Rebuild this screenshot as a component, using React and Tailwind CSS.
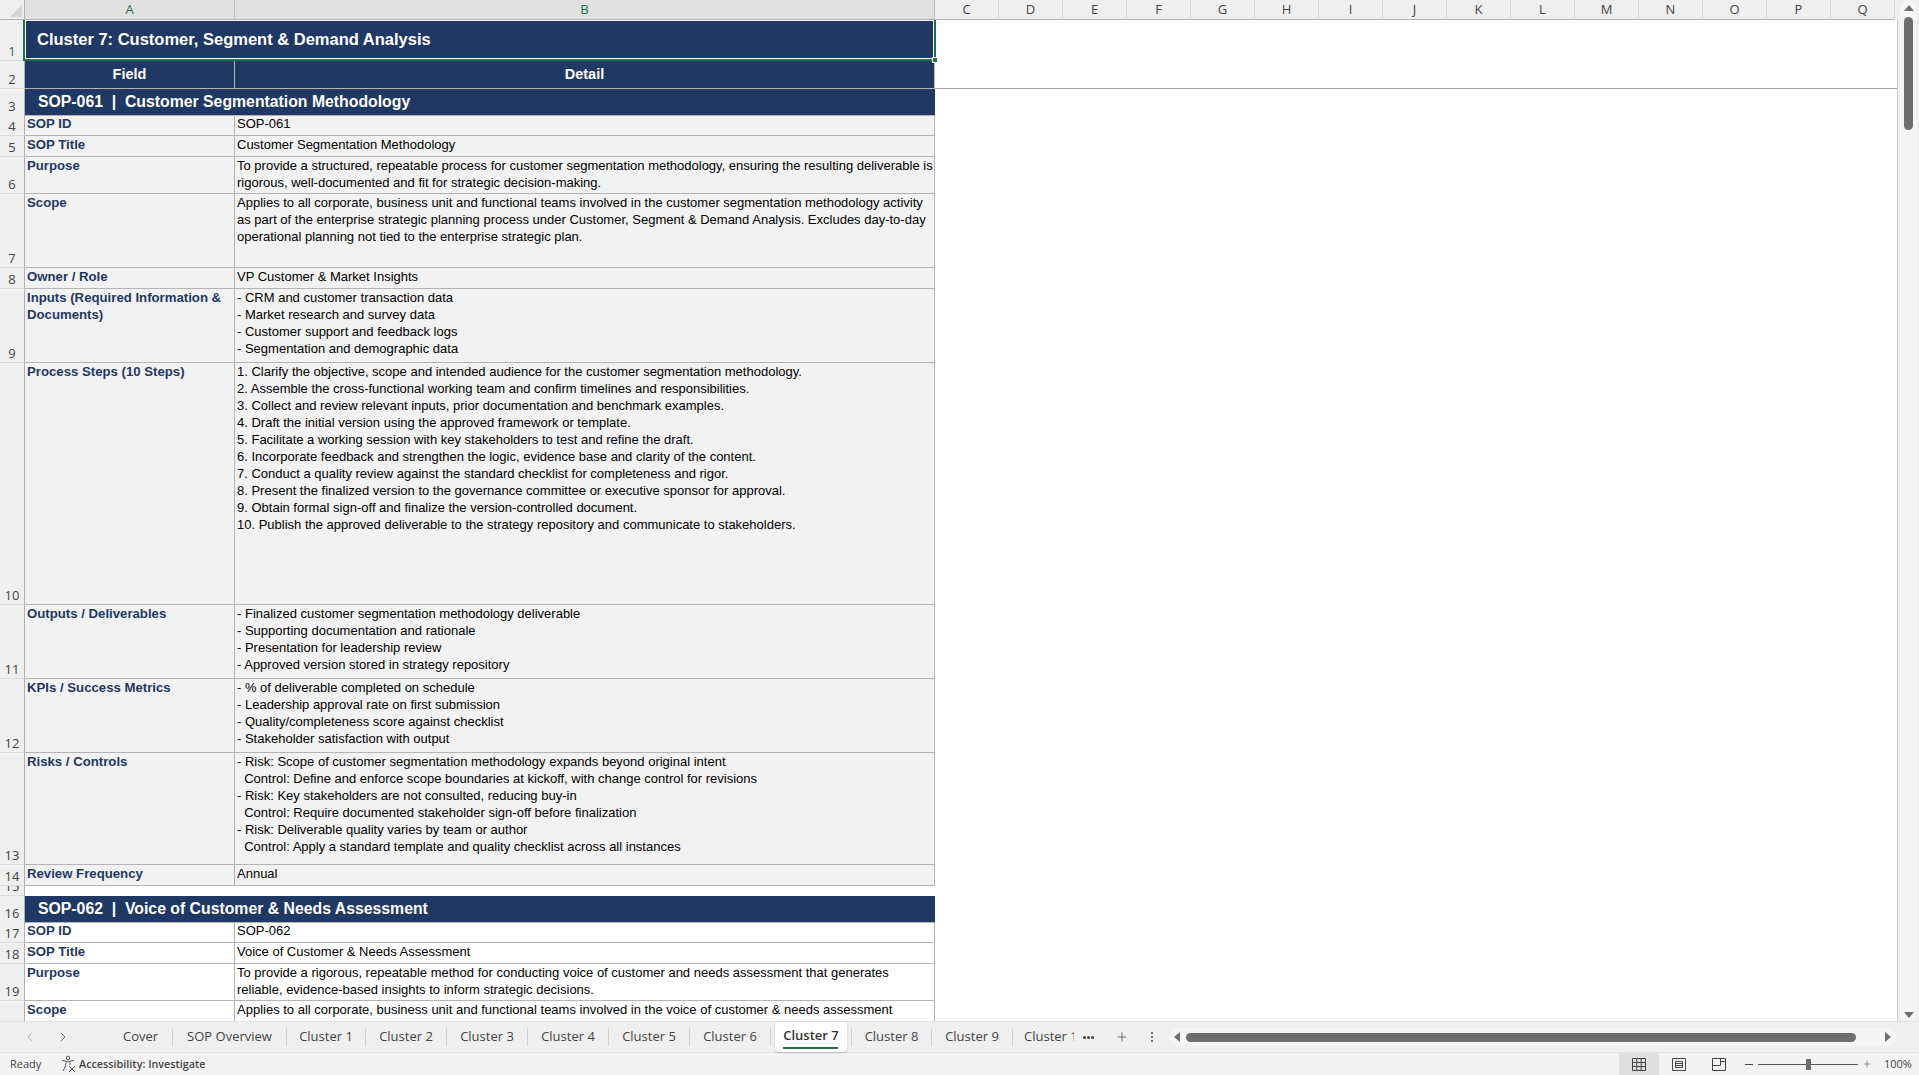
import { ChevronLeft, ChevronRight, Plus } from 'lucide-react'

const columns = ['C', 'D', 'E', 'F', 'G', 'H', 'I', 'J', 'K', 'L', 'M', 'N', 'O', 'P', 'Q']

const rows = [
    { n: 4, h: 'h-[21px]', a: 'SOP ID', b: 'SOP-061' },
    { n: 5, h: 'h-[21px]', a: 'SOP Title', b: 'Customer Segmentation Methodology' },
    { n: 6, h: 'h-[37px]', a: 'Purpose', b: 'To provide a structured, repeatable process for customer segmentation methodology, ensuring the resulting deliverable is\nrigorous, well-documented and fit for strategic decision-making.' },
    { n: 7, h: 'h-[74px]', a: 'Scope', b: 'Applies to all corporate, business unit and functional teams involved in the customer segmentation methodology activity\nas part of the enterprise strategic planning process under Customer, Segment & Demand Analysis. Excludes day-to-day\noperational planning not tied to the enterprise strategic plan.' },
    { n: 8, h: 'h-[21px]', a: 'Owner / Role', b: 'VP Customer & Market Insights' },
    { n: 9, h: 'h-[74px]', a: 'Inputs (Required Information &\nDocuments)', b: '- CRM and customer transaction data\n- Market research and survey data\n- Customer support and feedback logs\n- Segmentation and demographic data' },
    { n: 10, h: 'h-[242px]', a: 'Process Steps (10 Steps)', b: '1. Clarify the objective, scope and intended audience for the customer segmentation methodology.\n2. Assemble the cross-functional working team and confirm timelines and responsibilities.\n3. Collect and review relevant inputs, prior documentation and benchmark examples.\n4. Draft the initial version using the approved framework or template.\n5. Facilitate a working session with key stakeholders to test and refine the draft.\n6. Incorporate feedback and strengthen the logic, evidence base and clarity of the content.\n7. Conduct a quality review against the standard checklist for completeness and rigor.\n8. Present the finalized version to the governance committee or executive sponsor for approval.\n9. Obtain formal sign-off and finalize the version-controlled document.\n10. Publish the approved deliverable to the strategy repository and communicate to stakeholders.' },
    { n: 11, h: 'h-[74px]', a: 'Outputs / Deliverables', b: '- Finalized customer segmentation methodology deliverable\n- Supporting documentation and rationale\n- Presentation for leadership review\n- Approved version stored in strategy repository' },
    { n: 12, h: 'h-[74px]', a: 'KPIs / Success Metrics', b: '- % of deliverable completed on schedule\n- Leadership approval rate on first submission\n- Quality/completeness score against checklist\n- Stakeholder satisfaction with output' },
    { n: 13, h: 'h-[112px]', a: 'Risks / Controls', b: '- Risk: Scope of customer segmentation methodology expands beyond original intent\n  Control: Define and enforce scope boundaries at kickoff, with change control for revisions\n- Risk: Key stakeholders are not consulted, reducing buy-in\n  Control: Require documented stakeholder sign-off before finalization\n- Risk: Deliverable quality varies by team or author\n  Control: Apply a standard template and quality checklist across all instances' },
    { n: 14, h: 'h-[21px]', a: 'Review Frequency', b: 'Annual' },
]

const rows2 = [
    { n: 17, h: 'h-[21px]', a: 'SOP ID', b: 'SOP-062' },
    { n: 18, h: 'h-[21px]', a: 'SOP Title', b: 'Voice of Customer & Needs Assessment' },
    { n: 19, h: 'h-[37px]', a: 'Purpose', b: 'To provide a rigorous, repeatable method for conducting voice of customer and needs assessment that generates\nreliable, evidence-based insights to inform strategic decisions.' },
    { n: 20, h: 'h-[74px]', a: 'Scope', b: 'Applies to all corporate, business unit and functional teams involved in the voice of customer & needs assessment' },
]

const tabs = [
    { name: 'Cover', w: 'w-[63px]' },
    { name: 'SOP Overview', w: 'w-[113px]' },
    { name: 'Cluster 1', w: 'w-[78px]' },
    { name: 'Cluster 2', w: 'w-[80px]' },
    { name: 'Cluster 3', w: 'w-[80px]' },
    { name: 'Cluster 4', w: 'w-[80px]' },
    { name: 'Cluster 5', w: 'w-[80px]' },
    { name: 'Cluster 6', w: 'w-[80px]' },
]

// row number on the left edge, text sits low in the cell
const RowHead = ({ n, active }) => (
    <div className={`flex items-end justify-center overflow-hidden border-r border-b border-r-[#b0b0b0] border-b-[#dcdcdc] bg-[#efefef] font-['Open_Sans',sans-serif] text-[13px] leading-[17px] ${active ? 'text-[#1e7145]' : 'text-[#444444]'}`}>
        {n}
    </div>
)

const DataRow = ({ row, white }) => (
    <div className={`grid grid-cols-[25px_210px_700px] ${row.h} ${white ? 'bg-white' : 'bg-[#f2f2f2]'}`}>
        <RowHead n={row.n} />
        <div className="overflow-hidden whitespace-pre border-r border-b border-[#b4b4b4] pl-[2px] text-[13.2px] font-bold leading-[17px] text-[#1f3864]">{row.a}</div>
        <div className="overflow-hidden whitespace-pre border-r border-b border-[#b4b4b4] pl-[2px] text-[13px] leading-[17px] text-black">{row.b}</div>
    </div>
)

const SectionRow = ({ n, h, children }) => (
    <div className={`grid grid-cols-[25px_910px] ${h}`}>
        <RowHead n={n} />
        <div className="border-b border-[#b4b4b4] bg-[#1f3864] pl-[13px] text-[15.8px] font-bold leading-[26px] text-white">{children}</div>
    </div>
)

const Sep = () => <div className="h-[18px] w-px shrink-0 bg-[#d0d0d0]"></div>

const App = () => {
    return (
        <div className="flex h-[1075px] w-[1919px] flex-col overflow-hidden bg-white font-['Liberation_Sans',Arial,sans-serif]">
            <div className="flex h-[1021px] shrink-0">
                <div className="flex w-[1898px] shrink-0 flex-col">
                    {/* column letters */}
                    <div className="flex h-[20px] shrink-0">
                        <div className="flex w-[25px] items-end justify-end border-r border-b border-[#b0b0b0] bg-[#efefef] p-[2px]">
                            <div className="h-0 w-0 border-b-[12px] border-l-[12px] border-b-[#d4d4d4] border-l-transparent"></div>
                        </div>
                        <div className="flex w-[210px] items-center justify-center border-r border-b border-r-[#c0c0c0] border-b-[#b0b0b0] bg-[#e0e0e0] font-['Open_Sans',sans-serif] text-[13px] text-[#1e7145]">A</div>
                        <div className="flex w-[700px] items-center justify-center border-r border-b border-r-[#c0c0c0] border-b-[#b0b0b0] bg-[#e0e0e0] font-['Open_Sans',sans-serif] text-[13px] text-[#1e7145]">B</div>
                        {columns.map((c) => (
                            <div key={c} className="flex w-[64px] items-center justify-center border-r border-b border-r-[#d8d8d8] border-b-[#b0b0b0] bg-[#efefef] font-['Open_Sans',sans-serif] text-[13px] text-[#444444]">{c}</div>
                        ))}
                        <div className="flex-1 bg-[#efefef]"></div>
                    </div>

                    {/* sheet */}
                    <div className="relative flex h-[1001px] overflow-hidden border-r border-[#d0d0d0]">
                        <div className="w-[935px] shrink-0">
                            <div className="grid h-[41px] grid-cols-[25px_910px]">
                                <RowHead n={1} active />
                                <div className="bg-[#1f3864] pl-[12px] text-[16.5px] font-bold leading-[38px] text-white">Cluster 7: Customer, Segment &amp; Demand Analysis</div>
                            </div>
                            <div className="grid h-[28px] grid-cols-[25px_210px_700px]">
                                <RowHead n={2} />
                                <div className="border-r border-b border-[#b4b4b4] bg-[#1f3864] text-center text-[14.5px] font-bold leading-[26px] text-white">Field</div>
                                <div className="border-r border-b border-[#b4b4b4] bg-[#1f3864] text-center text-[14.5px] font-bold leading-[26px] text-white">Detail</div>
                            </div>
                            <SectionRow n={3} h="h-[26px]">SOP-061&nbsp; |&nbsp; Customer Segmentation Methodology</SectionRow>
                            {rows.map((row) => <DataRow key={row.n} row={row} />)}
                            <div className="grid h-[10px] grid-cols-[25px_910px]">
                                <RowHead n={15} />
                                <div className="bg-white"></div>
                            </div>
                            <SectionRow n={16} h="h-[26px]">SOP-062&nbsp; |&nbsp; Voice of Customer &amp; Needs Assessment</SectionRow>
                            {rows2.map((row) => <DataRow key={row.n} row={row} white />)}
                        </div>
                        <div className="h-[69px] flex-1 border-b border-[#a8a8a8]"></div>

                        {/* selected cell A1:B1 */}
                        <div className="absolute top-[-2px] left-[23px] h-[43px] w-[913px] border-2 border-[#1e7145]">
                            <div className="h-full w-full border border-white"></div>
                        </div>
                        <div className="absolute top-[37px] left-[932px] h-[6px] w-[6px] border border-white bg-[#1e7145]"></div>
                    </div>
                </div>

                {/* vertical scrollbar */}
                <div className="relative flex-1 bg-[#efefef]">
                    <div className="absolute top-0 bottom-0 left-[2px] w-[17px] rounded-full bg-[#f5f5f5]"></div>
                    <div className="absolute top-[5px] left-[6px] h-0 w-0 border-x-[5px] border-b-[6px] border-x-transparent border-b-[#6e6e6e]"></div>
                    <div className="absolute top-[17px] left-[6px] h-[113px] w-[9px] rounded-full bg-[#6e6e6e]"></div>
                    <div className="absolute top-[1012px] left-[6px] h-0 w-0 border-x-[5px] border-t-[6px] border-x-transparent border-t-[#6e6e6e]"></div>
                </div>
            </div>

            {/* sheet tabs */}
            <div className="flex h-[32px] shrink-0 items-center border-t border-b border-[#e2e2e2] bg-[#efefef] font-['Open_Sans',sans-serif] text-[13px] text-[#444444]">
                <div className="flex w-[109px] shrink-0 items-center gap-[17px] pl-[22px]">
                    <ChevronLeft size={16} strokeWidth={1.25} className="text-[#a8a8a8]" />
                    <ChevronRight size={16} strokeWidth={1.25} className="text-[#555555]" />
                </div>
                {tabs.map((t) => (
                    <div key={t.name} className="flex shrink-0 items-center">
                        <div className={`${t.w} text-center`}>{t.name}</div>
                        <Sep />
                    </div>
                ))}
                <div className="relative mx-[4px] flex h-full w-[72px] shrink-0 justify-center rounded-b-[4px] bg-white pt-[4px] font-semibold text-[#333333] shadow-[0_1px_2px_rgba(0,0,0,0.2)]">
                    Cluster 7
                    <div className="absolute top-[25px] left-[8px] h-[2px] w-[55px] bg-[#1e7145]"></div>
                </div>
                <Sep />
                <div className="w-[79px] shrink-0 text-center">Cluster 8</div>
                <Sep />
                <div className="w-[80px] shrink-0 text-center">Cluster 9</div>
                <Sep />
                <div className="ml-[11px] w-[50px] shrink-0 overflow-hidden whitespace-pre">Cluster 10</div>
                <div className="ml-[9px] flex w-[11px] shrink-0 justify-center gap-[1px]">
                    <div className="h-[3px] w-[3px] rounded-full bg-[#444444]"></div>
                    <div className="h-[3px] w-[3px] rounded-full bg-[#444444]"></div>
                    <div className="h-[3px] w-[3px] rounded-full bg-[#444444]"></div>
                </div>
                <Plus size={14} strokeWidth={1.25} className="ml-[21px] shrink-0 text-[#444444]" />
                <div className="ml-[22px] flex w-[2px] shrink-0 flex-col gap-[2px]">
                    <div className="h-[2px] w-[2px] rounded-full bg-[#444444]"></div>
                    <div className="h-[2px] w-[2px] rounded-full bg-[#444444]"></div>
                    <div className="h-[2px] w-[2px] rounded-full bg-[#444444]"></div>
                </div>
                {/* horizontal scrollbar */}
                <div className="ml-[16px] flex h-[18px] w-[727px] shrink-0 items-center rounded-full bg-[#f5f5f5] px-[5px]">
                    <div className="h-0 w-0 border-y-[5px] border-r-[6px] border-y-transparent border-r-[#6e6e6e]"></div>
                    <div className="ml-[6px] h-[9px] w-[670px] rounded-full bg-[#6e6e6e]"></div>
                    <div className="ml-auto h-0 w-0 border-y-[5px] border-l-[6px] border-y-transparent border-l-[#6e6e6e]"></div>
                </div>
            </div>

            {/* status bar */}
            <div className="flex h-[22px] shrink-0 items-center bg-[#f3f3f3] font-['Open_Sans',sans-serif] text-[11px] text-[#444444]">
                <div className="w-[60px] shrink-0 pl-[10px]">Ready</div>
                <svg width="18" height="18" viewBox="0 0 18 18" fill="none" stroke="#555555" strokeWidth="1" className="shrink-0">
                    <circle cx="8" cy="3" r="1.8" />
                    <path d="M2 5 L8 7 L14 5 M6 7.5 L5.5 11 L3 16 M10 7.5 V10" />
                    <path d="M9 11 L15 17 M15 11 L9 17" />
                </svg>
                <div className="ml-[1px] text-[10.8px] font-semibold text-[#444444]">Accessibility: Investigate</div>
                <div className="ml-auto flex h-full w-[40px] items-center justify-center bg-[#dedede]">
                    <svg width="14" height="13" viewBox="0 0 14 13" fill="none" stroke="#444444" strokeWidth="1">
                        <path d="M.5.5h13v12H.5zM.5 4.5h13M.5 8.5h13M4.8.5v12M9.2.5v12" />
                    </svg>
                </div>
                <div className="flex h-full w-[40px] items-center justify-center">
                    <svg width="14" height="13" viewBox="0 0 14 13" fill="none" stroke="#444444" strokeWidth="1">
                        <path d="M.5.5h13v12H.5zM3.5 3.5h7v6h-7zM3.5 5.5h7M3.5 7.5h7" />
                    </svg>
                </div>
                <div className="flex h-full w-[40px] items-center justify-center">
                    <svg width="14" height="13" viewBox="0 0 14 13" fill="none" stroke="#444444" strokeWidth="1">
                        <path d="M.5.5h13v12H.5zM.5 7.5h8V.5M8.5 3.5h5" />
                    </svg>
                </div>
                <div className="ml-[6px] h-px w-[8px] bg-[#444444]"></div>
                <div className="relative ml-[5px] h-px w-[100px] bg-[#555555]">
                    <div className="absolute top-[-5px] left-[48px] h-[11px] w-[5px] bg-[#6e6e6e]"></div>
                </div>
                <Plus size={10} strokeWidth={1.25} className="ml-[4px] shrink-0 text-[#444444]" />
                <div className="ml-[12px] w-[35px] shrink-0">100%</div>
            </div>
        </div>
    )
}

export default App
